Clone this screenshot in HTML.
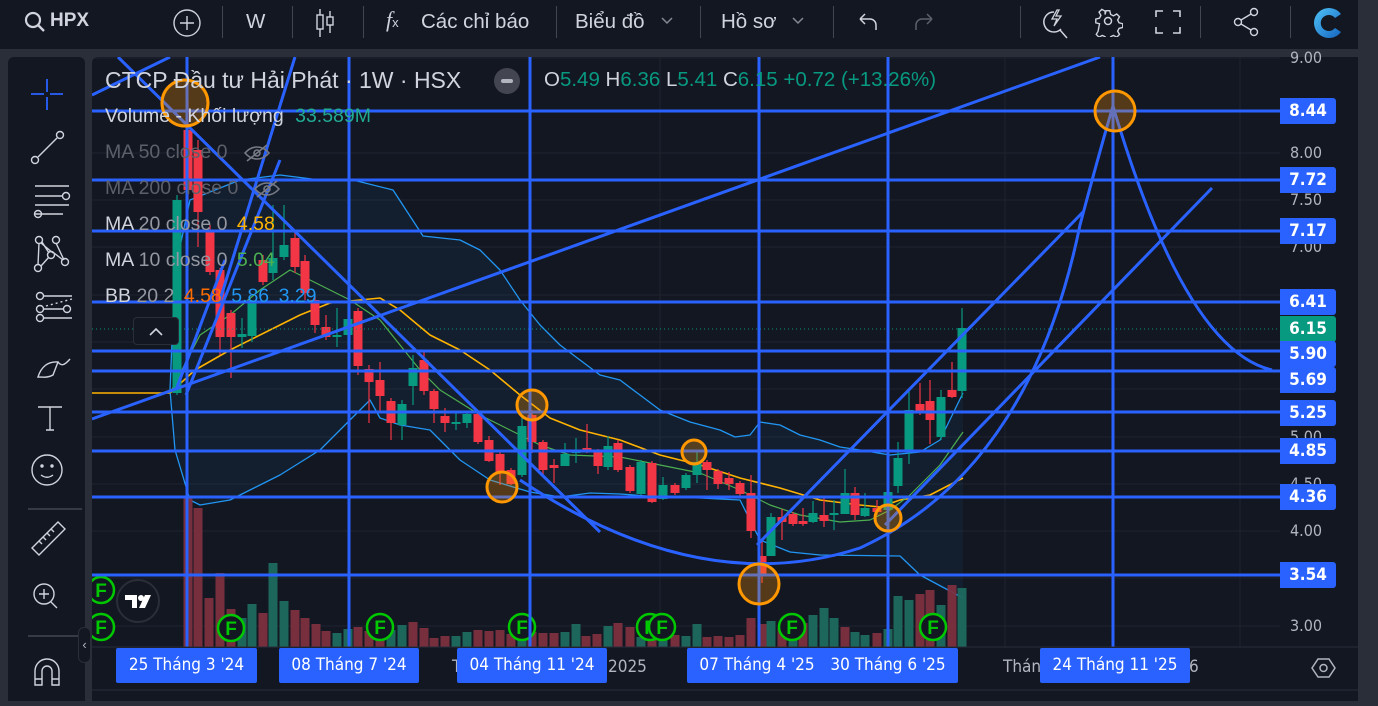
<!DOCTYPE html>
<html><head><meta charset="utf-8">
<style>
*{margin:0;padding:0;box-sizing:border-box}
body{width:1378px;height:701px;overflow:hidden;background:#2a2e39;font-family:"Liberation Sans","Noto Sans CJK SC",sans-serif;position:relative}
#top{position:absolute;left:0;top:0;width:1358px;height:49px;background:#131722;color:#d1d4dc;font-size:20.5px}
#top .t{position:absolute;top:10px;white-space:nowrap}
#top .sep{position:absolute;top:6px;width:1px;height:32px;background:#434651}
#left{position:absolute;left:8px;top:57px;width:77px;height:644px;background:#131722;border-radius:6px 6px 0 0}
#chart{position:absolute;left:92px;top:57px;width:1266px;height:644px;background:#131722;border-radius:6px 0 0 0;overflow:hidden}
#scroll{position:absolute;left:1358px;top:0;width:20px;height:701px;background:#2a2e39}
.lg{position:absolute;font-size:19.5px;white-space:nowrap;color:#d1d4dc}
.pl{position:absolute;left:1188px;width:56px;height:26px;background:#2962ff;color:#fff;font-size:17px;font-weight:bold;text-align:center;line-height:26px;border-radius:0 3px 3px 0;font-family:"DejaVu Sans Condensed","DejaVu Sans",sans-serif;font-stretch:condensed}
.pa{position:absolute;left:1198px;color:#b2b5be;font-size:16px;font-family:"DejaVu Sans Condensed","DejaVu Sans",sans-serif}
.tl{position:absolute;top:591px;height:35px;background:#2962ff;color:#fff;font-size:17px;text-align:center;line-height:35px;border-radius:2px;font-family:"DejaVu Sans Condensed","DejaVu Sans",sans-serif}
.tg{position:absolute;top:600px;color:#b2b5be;font-size:17px;font-family:"DejaVu Sans Condensed","DejaVu Sans",sans-serif}
</style></head><body>
<div id="top">
 <svg style="position:absolute;left:24px;top:11px" width="22" height="22" viewBox="0 0 22 22"><circle cx="9" cy="9" r="7" fill="none" stroke="#d1d4dc" stroke-width="2.2"/><path d="M14 14l6 6" stroke="#d1d4dc" stroke-width="2.4"/></svg>
 <div class="t" style="left:50px;font-weight:bold;font-size:19px">HPX</div>
 <svg style="position:absolute;left:172px;top:8px" width="30" height="30"><circle cx="15" cy="15" r="13" fill="none" stroke="#d1d4dc" stroke-width="1.4"/><path d="M15 8v14M8 15h14" stroke="#d1d4dc" stroke-width="1.4"/></svg>
 <div class="sep" style="left:222px"></div>
 <div class="t" style="left:246px">W</div>
 <div class="sep" style="left:292px"></div>
 <svg style="position:absolute;left:314px;top:7px" width="22" height="32"><path d="M6 2v28M16 4v22" stroke="#d1d4dc" stroke-width="1.4"/><rect x="3" y="8" width="6" height="14" fill="#131722" stroke="#d1d4dc" stroke-width="1.4"/><rect x="13" y="10" width="6" height="8" fill="#131722" stroke="#d1d4dc" stroke-width="1.4"/></svg>
 <div class="sep" style="left:363px"></div>
 <div class="t" style="left:386px;font-style:italic;font-family:'Liberation Serif',serif;font-size:22px;top:7px">f<span style="font-size:13px;font-style:normal;font-family:'Liberation Sans'">x</span></div>
 <div class="t" style="left:421px">Các chỉ báo</div>
 <div class="sep" style="left:556px"></div>
 <div class="t" style="left:575px">Biểu đồ</div>
 <svg style="position:absolute;left:660px;top:16px" width="14" height="10"><path d="M2 2l5 5 5-5" fill="none" stroke="#868993" stroke-width="1.5"/></svg>
 <div class="sep" style="left:700px"></div>
 <div class="t" style="left:721px">Hồ sơ</div>
 <svg style="position:absolute;left:791px;top:16px" width="14" height="10"><path d="M2 2l5 5 5-5" fill="none" stroke="#868993" stroke-width="1.5"/></svg>
 <div class="sep" style="left:833px"></div>
 <svg style="position:absolute;left:856px;top:10px" width="24" height="24"><path d="M4 9h10a6 6 0 0 1 6 6v5M4 9l5-5M4 9l5 5" fill="none" stroke="#d1d4dc" stroke-width="1.5"/></svg>
 <svg style="position:absolute;left:912px;top:10px" width="24" height="24"><path d="M20 9H10a6 6 0 0 0-6 6v5M20 9l-5-5M20 9l-5 5" fill="none" stroke="#5d606b" stroke-width="1.5"/></svg>
 <div class="sep" style="left:1020px"></div>
 <svg style="position:absolute;left:1038px;top:6px" width="34" height="34"><path d="M16 6a10 10 0 1 0 7 17" fill="none" stroke="#d1d4dc" stroke-width="1.5"/><path d="M22 24l7 8" stroke="#d1d4dc" stroke-width="1.5"/><path d="M19 4l-5 9h5l-3 7 7-10h-5l3-6z" fill="none" stroke="#d1d4dc" stroke-width="1.3"/></svg>
 <svg style="position:absolute;left:1093px;top:7px" width="30" height="30" viewBox="0 0 30 30"><path d="M13 3h4l1 4 3 1.5 3.5-2 3 3-2 3.5 1.5 3 4 1v4l-4 1-1.5 3 2 3.5-3 3-3.5-2-3 1.5-1 4h-4l-1-4-3-1.5-3.5 2-3-3 2-3.5L6 17l-4-1v-4l4-1 1.5-3-2-3.5 3-3 3.5 2L12 7z" transform="scale(0.93) translate(1,1)" fill="none" stroke="#d1d4dc" stroke-width="1.5"/><circle cx="15" cy="14" r="3.5" fill="none" stroke="#d1d4dc" stroke-width="1.5"/></svg>
 <svg style="position:absolute;left:1154px;top:9px" width="28" height="26"><path d="M2 8V2h7M19 2h7v6M26 18v6h-7M9 24H2v-6" fill="none" stroke="#d1d4dc" stroke-width="1.6"/></svg>
 <div class="sep" style="left:1200px"></div>
 <svg style="position:absolute;left:1232px;top:7px" width="28" height="30"><circle cx="22" cy="5" r="3.5" fill="none" stroke="#d1d4dc" stroke-width="1.4"/><circle cx="6" cy="15" r="3.5" fill="none" stroke="#d1d4dc" stroke-width="1.4"/><circle cx="22" cy="25" r="3.5" fill="none" stroke="#d1d4dc" stroke-width="1.4"/><path d="M9 13l10-6M9 17l10 6" stroke="#d1d4dc" stroke-width="1.4"/></svg>
 <div class="sep" style="left:1290px"></div>
 <svg style="position:absolute;left:1311px;top:5px" width="34" height="36"><defs><linearGradient id="lg" x1="0" y1="0" x2="1" y2="1"><stop offset="0" stop-color="#4fc3f7"/><stop offset="1" stop-color="#1565c0"/></linearGradient></defs><path d="M30 9A15 15 0 1 0 30 27L24 23A8 8 0 1 1 24 13Z" fill="url(#lg)"/></svg>
</div>
<div id="left">
 <svg width="77" height="644" viewBox="0 0 77 644" fill="none" stroke="#d1d4dc" stroke-width="1.4">
  <path d="M39 22v13M39 40v13M23 37h13M42 37h13" stroke="#2962ff" stroke-width="1.8"/>
  <circle cx="27" cy="103" r="3.5"/><circle cx="52" cy="78" r="3.5"/><path d="M30 100l19-19"/>
  <path d="M27 129h34M27 139h28M27 148h34M27 157h28"/><circle cx="58" cy="139" r="3.5"/><circle cx="30" cy="157" r="3.5"/>
  <circle cx="31" cy="183" r="3.5"/><circle cx="48" cy="183" r="3.5"/><circle cx="43" cy="198" r="3.5"/><circle cx="30" cy="211" r="3.5"/><circle cx="57" cy="205" r="3.5"/><path d="M31 186l-1 22M33 209l8-9M46 196l9 7M48 186l8 17M34 185l7 11M45 196l-12 -10"/>
  <circle cx="32" cy="239" r="3.5"/><circle cx="32" cy="252" r="3.5"/><circle cx="32" cy="261" r="3.5"/><circle cx="59" cy="252" r="3.5"/><path d="M36 239h28M36 252h19M36 261h28" /><path d="M38 249l26-7" stroke-dasharray="2 3"/>
  <path d="M30 320c3-10 10-16 20-15l-5 13c-5 3-10 2-15 2zM50 305c3 4 6 4 12-3" />
  <path d="M30 350h24M42 350v23M38 373h8"/>
  <circle cx="39" cy="413" r="15"/><circle cx="34" cy="409" r="1" fill="#d1d4dc"/><circle cx="44" cy="409" r="1" fill="#d1d4dc"/><path d="M33 418c4 3 8 3 12 0"/>
  <path d="M20 452h54" stroke="#434651"/>
  <path d="M24 491l26-26 7 7-26 26zM31 484l3 3M35 480l3 3M39 476l3 3M43 472l3 3"/>
  <circle cx="36" cy="537" r="10"/><path d="M43 545l6 6M36 532v10M31 537h10"/>
  <path d="M20 579h54" stroke="#434651"/>
  <path d="M27 628v-14a12 12 0 0 1 24 0v14h-7v-14a5 5 0 0 0-10 0v14zM27 622h7M44 622h7"/>
 </svg>
</div>
<div id="chart">
<svg id="sv" width="1266" height="644" style="position:absolute;left:0;top:0"></svg>
<div class="lg" style="left:13px;top:10px;font-size:23px">CTCP Đầu tư Hải Phát · 1W · HSX</div>
<div style="position:absolute;left:402px;top:11px;width:26px;height:26px;border-radius:50%;background:#434651"><div style="position:absolute;left:7px;top:11px;width:12px;height:4px;border-radius:2px;background:#b2b5be"></div></div>
<div class="lg" style="left:452px;top:11px;font-size:20.5px">O<span style="color:#089981">5.49</span> H<span style="color:#089981">6.36</span> L<span style="color:#089981">5.41</span> C<span style="color:#089981">6.15 +0.72 (+13.26%)</span></div>
<div class="lg" style="left:13px;top:48px">Volume - Khối lượng <span style="color:#22ab94;margin-left:6px">33.589M</span></div>
<div class="lg" style="left:13px;top:84px;color:#5d606b">MA 50 close 0</div>
<svg style="position:absolute;left:150px;top:85px" width="30" height="22"><path d="M3 11c7-8 17-8 24 0c-7 8-17 8-24 0zM5 19L25 3" fill="none" stroke="#787b86" stroke-width="1.6"/><circle cx="15" cy="11" r="3" fill="none" stroke="#787b86" stroke-width="1.6"/></svg>
<div class="lg" style="left:13px;top:120px;color:#5d606b">MA 200 close 0</div>
<svg style="position:absolute;left:160px;top:121px" width="30" height="22"><path d="M3 11c7-8 17-8 24 0c-7 8-17 8-24 0zM5 19L25 3" fill="none" stroke="#787b86" stroke-width="1.6"/><circle cx="15" cy="11" r="3" fill="none" stroke="#787b86" stroke-width="1.6"/></svg>
<div class="lg" style="left:13px;top:156px">MA <span style="color:#9598a1">20 close 0</span> <span style="color:#ffb300;margin-left:4px">4.58</span></div>
<div class="lg" style="left:13px;top:192px">MA <span style="color:#9598a1">10 close 0</span> <span style="color:#4caf50;margin-left:4px">5.04</span></div>
<div class="lg" style="left:13px;top:228px">BB <span style="color:#9598a1">20 2</span> <span style="color:#ff6d00;margin-left:4px">4.58</span> <span style="color:#2196f3;margin-left:4px">5.86</span> <span style="color:#2196f3;margin-left:4px">3.29</span></div>
<div style="position:absolute;left:41px;top:260px;width:46px;height:28px;border:1px solid #2a2e39;border-radius:4px;background:#131722"><svg width="46" height="28"><path d="M16 17l6-6 6 6" fill="none" stroke="#d1d4dc" stroke-width="1.6"/></svg></div>
<div style="position:absolute;left:24px;top:522px;width:44px;height:44px;border-radius:50%;background:#131722;border:2px solid #2a2e39"><svg width="40" height="40"><path d="M7 14h12v13h-5v-8H7z" fill="#fff"/><circle cx="23" cy="17" r="3" fill="#fff"/><path d="M27 14h6l-6 13h-6z" fill="#fff"/></svg></div>
</div>
<div style="position:absolute;left:78px;top:627px;width:13px;height:36px;background:#131722;border:1px solid #2a2e39;border-radius:6px;color:#b2b5be;font-size:13px;text-align:center;line-height:34px">‹</div>
<div id="scroll"></div>
<script>
var ns="http://www.w3.org/2000/svg",sv=document.getElementById('sv'),OX=92,OY=57;
function el(t,a){var e=document.createElementNS(ns,t);for(var k in a)e.setAttribute(k,a[k]);sv.appendChild(e);return e}
function P(pts){return pts.map(function(p){return (p[0]-OX)+','+(p[1]-OY)}).join(' ')}
function line(x1,y1,x2,y2,c,w,extra){var a={x1:x1-OX,y1:y1-OY,x2:x2-OX,y2:y2-OY,stroke:c,'stroke-width':w};for(var k in extra)a[k]=extra[k];return el('line',a)}
function pl(pts,c,w){return el('polyline',{points:P(pts),fill:'none',stroke:c,'stroke-width':w,'stroke-linejoin':'round'})}
[58,153,200,247,295,342,389,437,484,531,578,626].forEach(function(y){line(92,y,1280,y,'#1f2330',1)});
[186,350,530,660,760,888,1005,1113,1240].forEach(function(x){line(x,57,x,647,'#1f2330',1)});
var up=[[170,390],[175,270],[190,200],[240,180],[280,175],[320,180],[353,180],[393,190],[423,236],[460,240],[480,250],[500,270],[520,300],[540,325],[560,345],[600,375],[620,380],[640,395],[660,410],[690,422],[720,430],[735,437],[750,435],[760,422],[780,425],[800,435],[820,440],[840,447],[860,450],[890,455],[920,452],[940,440],[963,393]];
var lo=[[170,390],[175,450],[190,500],[200,505],[230,500],[280,475],[320,450],[350,420],[370,400],[380,418],[400,425],[430,430],[460,460],[490,480],[530,492],[560,497],[590,493],[620,494],[660,497],[700,498],[740,500],[760,540],[790,552],[820,555],[900,556],[920,575],[963,598]];
el('polygon',{points:P(up.concat(lo.slice().reverse())),fill:'rgba(33,150,243,0.06)'});
pl([[92,393],[170,393]],'#ffb300',1.5);
pl(up,'#2196f3',1.3);pl(lo,'#2196f3',1.3);
pl([[170,393],[195,370],[230,350],[270,330],[300,315],[330,303],[380,298],[400,310],[430,335],[460,350],[490,370],[520,395],[550,418],[580,430],[620,440],[660,455],[700,465],[740,478],[780,488],[820,500],[860,505],[880,507],[900,500],[930,495],[963,478]],'#ffb300',1.6);
pl([[170,393],[200,335],[230,315],[260,290],[290,270],[320,285],[350,300],[380,320],[400,345],[420,370],[440,390],[480,415],[510,430],[540,445],[570,455],[620,457],[660,465],[700,473],[740,490],[770,505],[800,515],[840,522],[870,520],[890,510],[910,495],[940,465],[963,432]],'#4caf50',1.2);
var vol=[[188,498,'r'],[198,508,'r'],[209,598,'r'],[220,573,'r'],[231,609,'r'],[242,618,'g'],[252,604,'g'],[263,613,'r'],[273,563,'g'],[284,601,'g'],[295,610,'r'],[305,618,'r'],[316,624,'r'],[326,631,'r'],[337,633,'g'],[348,629,'g'],[358,627,'r'],[369,631,'r'],[380,634,'r'],[391,630,'g'],[402,625,'g'],[413,622,'r'],[424,628,'r'],[434,638,'r'],[445,636,'r'],[456,636,'g'],[467,632,'g'],[478,630,'r'],[489,631,'r'],[500,630,'r'],[511,634,'r'],[522,630,'g'],[532,632,'r'],[543,633,'r'],[554,633,'r'],[565,632,'g'],[576,624,'g'],[586,636,'r'],[597,634,'r'],[608,626,'g'],[618,623,'r'],[630,627,'r'],[641,637,'g'],[652,632,'r'],[663,633,'g'],[675,635,'r'],[686,636,'g'],[697,624,'g'],[707,637,'r'],[718,636,'r'],[729,637,'r'],[740,635,'r'],[751,618,'r'],[762,624,'r'],[771,621,'g'],[782,628,'r'],[793,632,'g'],[803,623,'r'],[813,615,'g'],[824,608,'g'],[834,618,'g'],[845,627,'r'],[855,632,'g'],[865,635,'g'],[877,633,'r'],[888,629,'g'],[898,596,'g'],[909,600,'g'],[920,594,'r'],[930,590,'r'],[941,605,'g'],[952,585,'r'],[962,588,'g']];
vol.forEach(function(v){el('rect',{x:v[0]-OX-4.5,y:v[1]-OY,width:9,height:647-v[1],fill:v[2]=='r'?'#7c3040':'#1d6a5f',opacity:0.95})});
var cd=[[177,393,200,195,395],[188,130,190,100,200],[198,150,212,140,247],[210,230,272,225,275],[220,270,337,268,355],[231,313,337,310,378],[242,337,334,318,348],[252,336,303,300,342],[263,260,282,255,285],[273,273,258,205,280],[284,257,245,205,260],[295,238,267,232,273],[305,261,293,255,300],[315,300,325,296,333],[326,327,337,315,340],[337,337,335,308,347],[348,335,319,305,346],[358,311,366,308,375],[369,369,382,365,423],[380,380,396,362,411],[391,401,423,398,440],[402,425,404,400,440],[413,386,368,355,405],[424,360,391,351,395],[434,391,409,389,423],[445,416,423,408,432],[456,423,422,413,430],[467,423,414,412,428],[478,414,442,412,444],[489,440,461,436,462],[500,454,473,452,485],[511,470,484,468,485],[522,475,426,415,477],[532,415,442,410,453],[543,442,470,440,475],[554,465,468,459,483],[565,466,454,443,466],[576,453,451,438,463],[587,448,452,424,453],[598,451,466,449,474],[608,467,446,436,470],[618,443,470,440,472],[630,467,491,465,493],[641,494,462,460,495],[652,463,502,461,503],[663,499,485,477,500],[675,485,493,483,495],[686,488,475,473,490],[697,475,462,451,483],[707,462,470,460,490],[718,471,484,469,489],[729,478,484,472,490],[740,483,494,481,496],[751,493,531,475,538],[762,556,575,541,583],[771,556,517,513,556],[782,517,522,509,540],[793,514,524,512,526],[803,521,524,508,526],[813,522,513,501,523],[824,515,521,498,527],[834,515,513,500,530],[845,514,493,469,514],[855,493,515,487,520],[865,516,508,493,517],[877,508,512,500,515],[888,510,492,485,512],[898,486,458,442,493],[909,452,410,390,464],[920,404,411,383,415],[930,401,420,380,444],[941,437,397,390,440],[952,390,397,362,398],[962,391,328,308,398]];
cd.forEach(function(c){var g=c[2]<c[1];var col=g?'#089981':'#f23645';var t=Math.min(c[1],c[2]),b=Math.max(c[1],c[2]);
 line(c[0],c[3],c[0],c[4],col,1.2);el('rect',{x:c[0]-OX-4.5,y:t-OY,width:9,height:Math.max(b-t,2),fill:col})});
line(92,329,1280,329,'#089981',1,{'stroke-dasharray':'1 3'});
[[101,590],[101,627],[231,628],[380,627],[522,627],[650,627],[662,627],[792,627],[933,627]].forEach(function(f){el('circle',{cx:f[0]-OX,cy:f[1]-OY,r:13,fill:'#131722',stroke:'#00c800','stroke-width':2.5});var t=el('text',{x:f[0]-OX,y:f[1]-OY+7,fill:'#00c800','font-size':19,'font-weight':'bold','text-anchor':'middle','font-family':'Liberation Sans'});t.textContent='F'});
var B='#2962ff';
[111,180,231,302,351,371,412,451,497,575].forEach(function(y){line(92,y,1280,y,B,3)});
[187,349,530,759,888,1113].forEach(function(x){line(x,57,x,647,B,3)});
line(92,419,1100,57,B,3);
line(92,95,170,57,B,3);
line(118,57,600,532,B,3);
line(186,395,280,160,B,3);
line(176,390,225,260,B,3);
line(220,300,295,57,B,3);
line(757,545,1083,212,B,3);
line(885,525,1212,188,B,3);
el('path',{d:'M'+(520-OX)+','+(480-OY)+' Q'+(700-OX)+','+(600-OY)+' '+(860-OX)+','+(548-OY)+' Q'+(1030-OX)+','+(470-OY)+' '+(1080-OX)+','+(225-OY)+' Q'+(1100-OX)+','+(150-OY)+' '+(1113-OX)+','+(106-OY),fill:'none',stroke:B,'stroke-width':3});
el('path',{d:'M'+(1113-OX)+','+(106-OY)+' Q'+(1185-OX)+','+(350-OY)+' '+(1272-OX)+','+(370-OY),fill:'none',stroke:B,'stroke-width':3});
[[185,103,23],[1115,111,20],[532,405,15],[502,487,15],[694,452,12],[759,584,20],[888,518,13]].forEach(function(c){el('circle',{cx:c[0]-OX,cy:c[1]-OY,r:c[2],fill:'rgba(255,152,0,0.28)',stroke:'#ff9800','stroke-width':3})});
el('rect',{x:1188,y:0,width:78,height:644,fill:'#131722'});
el('rect',{x:0,y:590,width:1188,height:54,fill:'#131722'});
line(92,647,1280,647,'#2a2e39',1);line(92,690,1358,690,'#2a2e39',1);line(1280,647,1358,647,'#2a2e39',1);
el('path',{d:'M'+(1312-OX)+','+(668-OY)+' l6-9h11l6 9-6 9h-11z',fill:'none',stroke:'#b2b5be','stroke-width':1.5});
el('circle',{cx:1323.5-OX,cy:668-OY,r:3.5,fill:'none',stroke:'#b2b5be','stroke-width':1.5});
</script>
<div style="position:absolute;left:92px;top:57px;width:1266px;height:644px;pointer-events:none">
<div class="pa" style="top:-9px">9.00</div>
<div class="pa" style="top:86px">8.00</div>
<div class="pa" style="top:133px">7.50</div>
<div class="pa" style="top:180px">7.00</div>
<div class="pa" style="top:370px">5.00</div>
<div class="pa" style="top:417px">4.50</div>
<div class="pa" style="top:464px">4.00</div>
<div class="pa" style="top:559px">3.00</div>
<div class="pl" style="top:41px">8.44</div>
<div class="pl" style="top:110px">7.72</div>
<div class="pl" style="top:161px">7.17</div>
<div class="pl" style="top:232px">6.41</div>
<div class="pl" style="top:259px;background:#089981">6.15</div>
<div class="pl" style="top:284px">5.90</div>
<div class="pl" style="top:310px">5.69</div>
<div class="pl" style="top:343px">5.25</div>
<div class="pl" style="top:381px">4.85</div>
<div class="pl" style="top:427px">4.36</div>
<div class="pl" style="top:505px">3.54</div>
<div class="tg" style="left:360px">T</div>
<div class="tg" style="left:516px">2025</div>
<div class="tg" style="left:911px">Thán</div>
<div class="tg" style="left:1097px">6</div>
<div class="tl" style="left:24px;width:141px">25 Tháng 3 '24</div>
<div class="tl" style="left:187px;width:140px">08 Tháng 7 '24</div>
<div class="tl" style="left:365px;width:150px">04 Tháng 11 '24</div>
<div class="tl" style="left:595px;width:140px">07 Tháng 4 '25</div>
<div class="tl" style="left:726px;width:140px">30 Tháng 6 '25</div>
<div class="tl" style="left:948px;width:150px">24 Tháng 11 '25</div>
</div>
</body></html>
